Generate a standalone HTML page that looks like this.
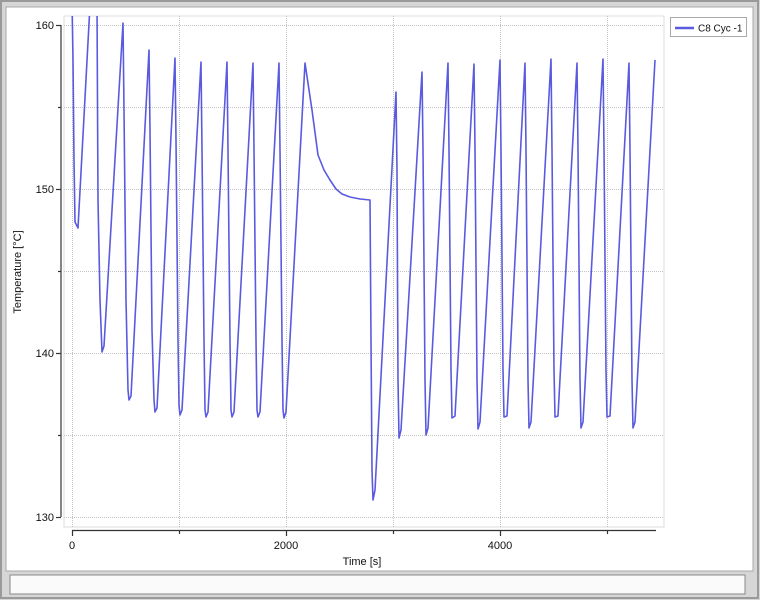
<!DOCTYPE html>
<html><head><meta charset="utf-8"><style>
body{margin:0;width:760px;height:600px;background:#d6d6d6;overflow:hidden;font-family:"Liberation Sans",sans-serif}
</style></head><body>
<svg width="760" height="600" xmlns="http://www.w3.org/2000/svg" style="position:absolute;left:0;top:0">
<rect x="0" y="0" width="760" height="600" fill="#d6d6d6"/>
<rect x="1" y="1" width="757" height="597" fill="none" stroke="#9a9a9a" stroke-width="2"/>
<rect x="6" y="7" width="747" height="564" fill="#fff" stroke="#a8a8a8"/>
<rect x="10" y="575" width="735" height="19" fill="#fafafa" stroke="#888"/>
<rect x="64" y="16" width="600" height="511" fill="#fff" stroke="#ddd"/>
<g stroke="#c4c4c4" stroke-dasharray="1,1" stroke-width="1">
<line x1="72.5" y1="16" x2="72.5" y2="527"/><line x1="179.5" y1="16" x2="179.5" y2="527"/><line x1="286.5" y1="16" x2="286.5" y2="527"/><line x1="393.5" y1="16" x2="393.5" y2="527"/><line x1="500.5" y1="16" x2="500.5" y2="527"/><line x1="607.5" y1="16" x2="607.5" y2="527"/>
<line x1="64" y1="25.5" x2="664" y2="25.5"/><line x1="64" y1="107.5" x2="664" y2="107.5"/><line x1="64" y1="189.5" x2="664" y2="189.5"/><line x1="64" y1="271.5" x2="664" y2="271.5"/><line x1="64" y1="353.5" x2="664" y2="353.5"/><line x1="64" y1="435.5" x2="664" y2="435.5"/><line x1="64" y1="517.5" x2="664" y2="517.5"/>
</g>
<g stroke="#333" stroke-width="1.2" fill="none">
<line x1="61" y1="25" x2="61" y2="517"/>
<line x1="56" y1="25.5" x2="61" y2="25.5"/><line x1="58" y1="107.5" x2="61" y2="107.5"/><line x1="56" y1="189.5" x2="61" y2="189.5"/><line x1="58" y1="271.5" x2="61" y2="271.5"/><line x1="56" y1="353.5" x2="61" y2="353.5"/><line x1="58" y1="435.5" x2="61" y2="435.5"/><line x1="56" y1="517.5" x2="61" y2="517.5"/>
<line x1="72" y1="530.5" x2="656" y2="530.5"/>
<line x1="72.5" y1="530" x2="72.5" y2="536"/><line x1="179.5" y1="530" x2="179.5" y2="534"/><line x1="286.5" y1="530" x2="286.5" y2="536"/><line x1="393.5" y1="530" x2="393.5" y2="534"/><line x1="500.5" y1="530" x2="500.5" y2="536"/><line x1="607.5" y1="530" x2="607.5" y2="534"/>
</g>
<g font-size="11" fill="#111" text-anchor="end">
<text x="54" y="29">160</text><text x="54" y="193">150</text><text x="54" y="357">140</text><text x="54" y="521">130</text>
</g>
<g font-size="11" fill="#111" text-anchor="middle">
<text x="72" y="549">0</text><text x="286" y="549">2000</text><text x="500" y="549">4000</text>
<text x="362" y="565">Time [s]</text>
<text transform="translate(21,272) rotate(-90)">Temperature [°C]</text>
</g>
<defs><clipPath id="c"><rect x="64" y="16" width="600" height="511"/></clipPath></defs>
<path clip-path="url(#c)" fill="none" stroke="#5a5ae0" stroke-width="1.6" stroke-linejoin="round" d="M72,0 L73,60 L74,160 L75,222 L78,228 L90,5 L97,5 L98,200 L100,300 L102,352 L104,346 L123,23 L124,110 L126,300 L128,390 L129,400 L131,396 L149,50 L150,130 L152,330 L154,400 L155,412 L157,408 L175,58 L176,140 L178,340 L179,405 L180,415 L182,410 L201,62 L202,150 L204,340 L205,410 L206,417 L208,412 L227,62 L228,150 L230,340 L231,410 L232,417 L234,412 L253,63 L254,150 L256,340 L257,410 L258,417 L260,412 L279,63 L280,150 L282,340 L283,410 L284,418 L286,412 L305,63 L312,110 L318,155 L324,170 L330,180 L336,189 L342,194 L350,197 L360,199 L370,200 L371,340 L372,470 L373,500 L375,490 L396,92 L397,170 L398,380 L399,438 L401,430 L422,72 L423,150 L425,380 L426,435 L428,428 L448,63 L449,150 L451,370 L452,418 L455,416 L474,64 L475,150 L477,380 L478,429 L480,422 L500,60 L501,150 L503,370 L504,417 L507,416 L525,63 L526,150 L528,380 L529,428 L531,422 L551,59 L552,150 L554,370 L555,417 L558,416 L577,63 L578,150 L580,380 L581,428 L583,422 L603,59 L604,150 L606,370 L607,417 L610,416 L629,63 L630,150 L632,380 L633,428 L635,422 L655,60"/>
<rect x="670.5" y="17.5" width="76" height="19" fill="#fff" stroke="#aaa"/>
<line x1="675" y1="28" x2="694" y2="28" stroke="#5a5ae0" stroke-width="2.5"/>
<text x="698" y="31.5" font-size="10" fill="#111">C8 Cyc -1</text>
</svg>
</body></html>
